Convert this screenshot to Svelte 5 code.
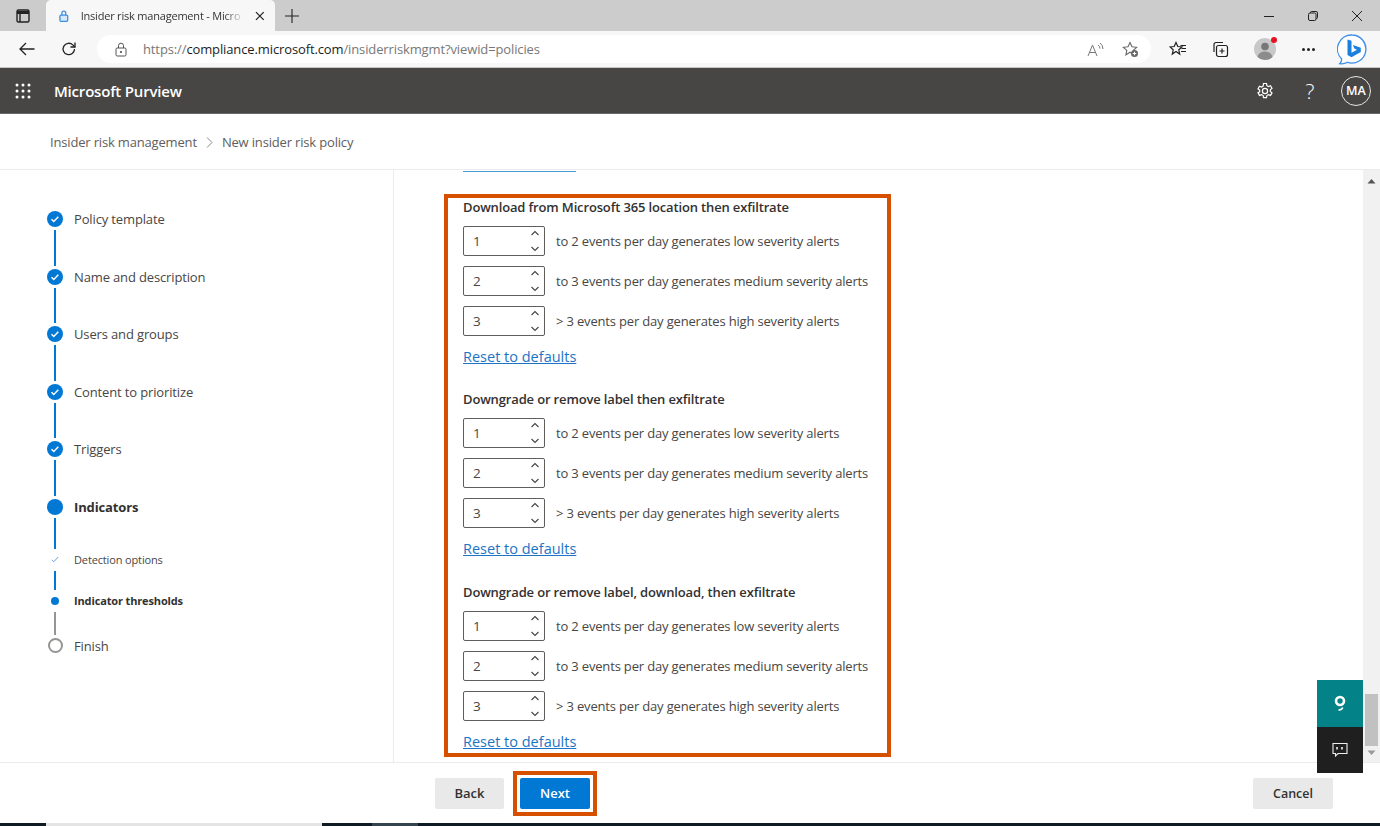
<script lang="ts">
    const steps = [
        { label: "Policy template", kind: "done" },
        { label: "Name and description", kind: "done" },
        { label: "Users and groups", kind: "done" },
        { label: "Content to prioritize", kind: "done" },
        { label: "Triggers", kind: "done" },
        { label: "Indicators", kind: "current" },
        { label: "Detection options", kind: "subdone" },
        { label: "Indicator thresholds", kind: "subcurrent" },
        { label: "Finish", kind: "todo" },
    ];

    const sections = [
        "Download from Microsoft 365 location then exfiltrate",
        "Downgrade or remove label then exfiltrate",
        "Downgrade or remove label, download, then exfiltrate",
    ];

    const rows = [
        { value: 1, text: "to 2 events per day generates low severity alerts" },
        { value: 2, text: "to 3 events per day generates medium severity alerts" },
        { value: 3, text: "> 3 events per day generates high severity alerts" },
    ];
</script>

<div class="page">
    <div class="tabbar">
        <svg class="tabs-icon" width="16" height="16" viewBox="0 0 16 16" fill="none" stroke="#222" stroke-width="1.4">
            <rect x="2" y="2" width="12" height="12" rx="1.5" />
            <path d="M2 4.5h12" stroke-width="3" />
            <path d="M5 5v9" />
        </svg>
        <div class="tab">
            <svg width="12" height="14" viewBox="0 0 12 14" fill="none" stroke="#3b8fe0" stroke-width="1.3">
                <rect x="2" y="6" width="8" height="6.5" rx="1" fill="#d6e8fa" />
                <path d="M4 6V4a2 2 0 0 1 4 0v2" />
            </svg>
            <span class="tab-title">Insider risk management - Micro</span>
            <svg width="10" height="10" viewBox="0 0 10 10" stroke="#222" stroke-width="1.3"><path d="M1 1l8 8M9 1l-8 8" /></svg>
        </div>
        <svg class="plus" width="14" height="14" viewBox="0 0 14 14" stroke="#222" stroke-width="1.1"><path d="M7 0v14M0 7h14" /></svg>
        <div class="window-btns">
            <svg width="12" height="12" viewBox="0 0 12 12" stroke="#222" stroke-width="1"><path d="M1 6.5h10" /></svg>
            <svg width="12" height="12" viewBox="0 0 12 12" fill="none" stroke="#222" stroke-width="1"><rect x="1.5" y="3" width="7.5" height="7.5" rx="1.5" /><path d="M3.5 3V2.5a1 1 0 0 1 1-1h4.5a1.5 1.5 0 0 1 1.5 1.5v4.5a1 1 0 0 1-1 1H9" /></svg>
            <svg width="12" height="12" viewBox="0 0 12 12" stroke="#222" stroke-width="1"><path d="M1 1l10 10M11 1l-10 10" /></svg>
        </div>
    </div>

    <div class="toolbar">
        <svg class="back" width="16" height="14" viewBox="0 0 16 14" fill="none" stroke="#222" stroke-width="1.3"><path d="M15.500 7H1M7 1L1 7l6 6" /></svg>
        <svg class="reload" width="16" height="16" viewBox="0 0 16 16" fill="none" stroke="#222" stroke-width="1.3"><path d="M13.500 8a5.700 5.700 0 1 1-1.700-4.100L14 6" /><path d="M14 1.500V6H9.500" /></svg>
        <div class="address">
            <svg width="12" height="15" viewBox="0 0 12 15" fill="none" stroke="#555" stroke-width="1"><rect x="1" y="6" width="10" height="8" rx="1.2" /><path d="M3.500 6V3.700a2.500 2.500 0 0 1 5 0V6" /><circle cx="6" cy="10" r=".7" fill="#555" /></svg>
            <span class="url"><span class="dim">https://</span>compliance.microsoft.com<span class="dim">/insiderriskmgmt?viewid=policies</span></span>
            <svg class="read" width="17" height="15" viewBox="0 0 17 15" fill="none" stroke="#777" stroke-width="1"><path d="M1 14L5.500 3 10 14M2.600 10.500h5.800" /><path d="M11 3q2 1 2 3.500M13 1q3 2 3 6" /></svg>
            <svg class="fav-add" width="17" height="17" viewBox="0 0 17 17" fill="none" stroke="#666" stroke-width="1.1"><path d="M8 1.500l2 4.300 4.600.5-3.400 3.100.9 4.500L8 11.200l-4.100 2.700.9-4.500L1.400 6.300 6 5.800z" /><circle cx="12.500" cy="12.500" r="3.500" fill="#666" stroke="none" /><path d="M12.500 10.700v3.600M10.700 12.500h3.600" stroke="#fff" /></svg>
        </div>
        <div class="tools">
            <svg width="18" height="16" viewBox="0 0 18 16" fill="none" stroke="#222" stroke-width="1.2"><path d="M7 1.500l1.800 4 4.200.4-3.200 2.900.9 4.300L7 10.500l-3.700 2.600.9-4.300L1 5.900l4.200-.4z" /><path d="M11.500 4.500H17M12.500 7.500H17M12 10.500h5" /></svg>
            <svg width="17" height="17" viewBox="0 0 17 17" fill="none" stroke="#222" stroke-width="1.2"><rect x="4.500" y="4.500" width="11" height="11" rx="2" /><path d="M10 7.500v5M7.500 10h5" /><path d="M2 11V3.500A2 2 0 0 1 4 1.500h7" /></svg>
            <div class="avatar">
                <svg width="22" height="22" viewBox="0 0 22 22"><circle cx="11" cy="11" r="11" fill="#c8c8c8" /><circle cx="11" cy="8.500" r="3.800" fill="#777" /><path d="M3.500 19c1-4 4-5.500 7.500-5.500s6.500 1.500 7.500 5.500A11 11 0 0 1 3.500 19z" fill="#8c8c8c" /></svg>
                <span class="red-dot"></span>
            </div>
            <span class="dots"><i></i><i></i><i></i></span>
            <svg class="bing" width="30" height="31" viewBox="0 0 30 31">
                <path d="M15 1a14 14 0 1 1-4.500 27.300c-2 1.200-5 1.700-7.800 1.400 1.300-1 2-2.700 2-4.700A14 14 0 0 1 15 1z" fill="#fff" stroke="#3f8fe8" stroke-width="1.300" />
                <path d="M10.500 5.500l4 1.300v12l5.500-3-2.700-1.200-1.400-3.600 7.900 2.800v4.100l-9.300 5.400-4-2.400z" fill="#1b7fe0" />
            </svg>
        </div>
    </div>

    <header class="suite">
        <svg class="waffle" width="16" height="16" viewBox="0 0 16 16" fill="#fff">
            {#each [2, 8, 14] as y}
                {#each [2, 8, 14] as x}
                    <circle cx={x} cy={y} r="1.500" />
                {/each}
            {/each}
        </svg>
        <span class="brand">Microsoft Purview</span>
        <div class="suite-actions">
            <svg width="18" height="18" viewBox="0 0 18 18" fill="none" stroke="#fff" stroke-width="1.200">
                <path d="M7.500 1.500h3l.4 2.200 1.500.9 2.100-.8 1.500 2.600-1.700 1.400v1.600l1.700 1.400-1.500 2.600-2.100-.8-1.500.9-.4 2.200h-3l-.4-2.200-1.500-.9-2.100.8-1.500-2.600L3.700 9.800V8.200L2 6.800l1.500-2.600 2.100.8 1.500-.9z" />
                <circle cx="9" cy="9" r="2.600" />
            </svg>
            <span class="help">?</span>
            <span class="me">MA</span>
        </div>
    </header>

    <nav class="crumbs">
        <span>Insider risk management</span>
        <svg width="7" height="11" viewBox="0 0 7 11" fill="none" stroke="#8a8886" stroke-width="1"><path d="M1 .5l5 5-5 5" /></svg>
        <span>New insider risk policy</span>
    </nav>

    <main class="main">
        <aside class="wizard">
            {#each steps as step, i}
                <div class="step {step.kind}">
                    <span class="rail">
                        {#if step.kind === "done"}
                            <svg width="16" height="16" viewBox="0 0 16 16"><circle cx="8" cy="8" r="8" fill="#0078d4" /><path d="M4.500 8.300l2.300 2.200 4.500-4.700" fill="none" stroke="#fff" stroke-width="1.500" /></svg>
                        {:else if step.kind === "current"}
                            <span class="dot big"></span>
                        {:else if step.kind === "subdone"}
                            <svg width="8" height="7" viewBox="0 0 8 7"><path d="M.8 3.800l2 2L7.200 1" fill="none" stroke="#6d9fd8" stroke-width="1" /></svg>
                        {:else if step.kind === "subcurrent"}
                            <span class="dot small"></span>
                        {:else}
                            <span class="dot hollow"></span>
                        {/if}
                    </span>
                    <span class="step-label">{step.label}</span>
                </div>
                {#if i < steps.length - 1}
                    <span class="link-line" class:grey={step.kind === "subcurrent"} class:short={i >= 6} class:mid={i === 5}></span>
                {/if}
            {/each}
        </aside>

        <section class="pane">
            <div class="cut-link"></div>
            <div class="callout">
                {#each sections as title}
                    <div class="group">
                        <h3>{title}</h3>
                        {#each rows as row}
                            <div class="row">
                                <div class="spin">
                                    <span>{row.value}</span>
                                    <svg width="10" height="24" viewBox="0 0 10 24" fill="none" stroke="#444" stroke-width="1.100"><path d="M1.500 6L5 2.500 8.500 6M1.500 18L5 21.500 8.500 18" /></svg>
                                </div>
                                <span class="row-text">{row.text}</span>
                            </div>
                        {/each}
                        <a href="#top" class="reset">Reset to defaults</a>
                    </div>
                {/each}
            </div>
        </section>

        <div class="scrollbar">
            <svg width="9" height="6" viewBox="0 0 9 6" fill="#555"><path d="M4.500 1L8.500 5.500H.5z" /></svg>
            <span class="thumb"></span>
            <svg width="9" height="6" viewBox="0 0 9 6" fill="#999"><path d="M4.500 5L8.500.5H.5z" /></svg>
        </div>

        <div class="float-btns">
            <div class="fb teal">
                <svg width="12" height="16" viewBox="0 0 12 16" fill="none" stroke="#fff"><circle cx="6" cy="6" r="4" stroke-width="2.600" /><path d="M4.500 14.700c2 .5 3.500-.2 4.300-2.200" stroke-width="1.700" /></svg>
            </div>
            <div class="fb dark">
                <svg width="16" height="16" viewBox="0 0 16 16" fill="none" stroke="#eee" stroke-width="1.100"><path d="M1 1.500h14v10H6l-2.500 2.500v-2.500H1z" /><path d="M5 5v2.500M10 5v2.500" stroke-width="1.600" /></svg>
            </div>
        </div>
    </main>

    <footer class="footer">
        <button class="btn back-btn">Back</button>
        <span class="next-mark"><button class="btn primary">Next</button></span>
        <button class="btn cancel">Cancel</button>
    </footer>

    <div class="taskbar"><i class="white"></i><i class="lit"></i></div>
</div>

<style>
    :global(body) {
        margin: 0;
        background: #fff;
    }

    .page {
        width: 1380px;
        height: 826px;
        display: flex;
        flex-direction: column;
        overflow: hidden;
        font-family: "Open Sans", "Noto Sans", sans-serif;
        color: #323130;
    }

    .tabbar {
        height: 31px;
        background: #cccccc;
        display: flex;
        align-items: center;
        flex: none;
    }

    .tabs-icon {
        margin-left: 15px;
    }

    .tab {
        width: 229px;
        height: 31px;
        margin-left: 15px;
        box-sizing: border-box;
        padding: 0 10px 0 12px;
        background: #f7f7f7;
        border-radius: 5px 5px 0 0;
        display: flex;
        align-items: center;
        gap: 11px;
    }

    .tab-title {
        width: 169px;
        font-size: 11px;
        white-space: nowrap;
        color: #333;
        letter-spacing: -0.2px;
        -webkit-mask-image: linear-gradient(to right, #000 88%, transparent 100%);
        mask-image: linear-gradient(to right, #000 88%, transparent 100%);
    }

    .plus {
        margin-left: 10px;
    }

    .window-btns {
        margin-left: auto;
        margin-right: 17px;
        display: flex;
        gap: 32px;
    }

    .toolbar {
        height: 37px;
        background: #f7f7f7;
        border-bottom: 1px solid #c6c6c6;
        box-sizing: border-box;
        display: flex;
        align-items: center;
        flex: none;
    }

    .back {
        margin-left: 19px;
    }

    .reload {
        margin-left: 26px;
    }

    .address {
        width: 1054px;
        height: 28px;
        margin-left: 20px;
        border-radius: 14px;
        background: #fff;
        display: flex;
        align-items: center;
        box-sizing: border-box;
        padding-left: 18px;
    }

    .url {
        margin-left: 16px;
        font-size: 13px;
        color: #1d1d1d;
        letter-spacing: -0.12px;
        white-space: nowrap;
    }

    .dim {
        color: #777;
    }

    .read {
        margin-left: auto;
    }

    .fav-add {
        margin: 0 12px 0 18px;
    }

    .tools {
        display: flex;
        align-items: center;
        margin-left: 18px;
    }

    .tools > svg:nth-child(2) {
        margin-left: 25px;
    }

    .avatar {
        position: relative;
        width: 22px;
        height: 22px;
        margin-left: 25px;
    }

    .avatar svg {
        display: block;
    }

    .red-dot {
        position: absolute;
        top: -1px;
        right: -1px;
        width: 6px;
        height: 6px;
        border-radius: 50%;
        background: #e81123;
    }

    .dots {
        display: flex;
        gap: 2px;
        margin-left: 26px;
    }

    .dots i {
        width: 3px;
        height: 3px;
        border-radius: 50%;
        background: #222;
    }

    .bing {
        margin-left: 22px;
    }

    .suite {
        height: 46px;
        background: #484644;
        border-bottom: 1px solid #6a6866;
        box-sizing: border-box;
        display: flex;
        align-items: center;
        color: #fff;
        flex: none;
    }

    .waffle {
        margin-left: 15px;
    }

    .brand {
        margin-left: 23px;
        font-size: 15px;
        font-weight: 600;
        letter-spacing: -0.2px;
    }

    .suite-actions {
        margin-left: auto;
        margin-right: 9px;
        display: flex;
        align-items: center;
    }

    .help {
        margin-left: 21px;
        width: 30px;
        font-size: 21px;
        font-weight: 300;
        text-align: center;
    }

    .me {
        margin-left: 16px;
        width: 28px;
        height: 28px;
        border: 1px solid #e6e6e6;
        border-radius: 50%;
        display: flex;
        align-items: center;
        justify-content: center;
        font-size: 12.500px;
        font-weight: 600;
    }

    .crumbs {
        height: 56px;
        flex: none;
        box-sizing: border-box;
        border-bottom: 1px solid #edebe9;
        padding: 1px 0 0 50px;
        display: flex;
        align-items: center;
        gap: 9px;
        font-size: 13px;
        color: #605e5c;
        letter-spacing: -0.17px;
    }

    .main {
        position: relative;
        flex: 1;
        display: flex;
        min-height: 0;
    }

    .wizard {
        width: 394px;
        flex: none;
        box-sizing: border-box;
        border-right: 1px solid #edebe9;
        padding: 38px 0 0 45px;
        display: flex;
        flex-direction: column;
    }

    .step {
        display: flex;
        align-items: center;
        height: 22px;
        flex: none;
    }

    .rail {
        width: 20px;
        display: flex;
        justify-content: center;
        align-items: center;
    }

    .step-label {
        margin-left: 9px;
        font-size: 13px;
        letter-spacing: -0.14px;
        color: #484644;
    }

    .current .step-label,
    .subcurrent .step-label {
        font-weight: 700;
        color: #323130;
    }

    .subdone .step-label,
    .subcurrent .step-label {
        font-size: 11px;
    }

    .dot {
        display: block;
        border-radius: 50%;
        box-sizing: border-box;
    }

    .big {
        width: 16px;
        height: 16px;
        background: #0078d4;
    }

    .small {
        width: 8px;
        height: 8px;
        background: #0078d4;
    }

    .hollow {
        width: 15px;
        height: 15px;
        border: 2px solid #979593;
    }

    .link-line {
        width: 2px;
        height: 35.500px;
        margin-left: 9px;
        background: #0078d4;
        flex: none;
    }

    .link-line.mid {
        height: 31px;
    }

    .link-line.short {
        height: 19px;
    }

    .link-line.grey {
        height: 23px;
        background: #979593;
    }

    .pane {
        flex: 1;
        min-width: 0;
        overflow: hidden;
        padding-left: 50px;
    }

    .cut-link {
        width: 113px;
        height: 1px;
        margin-left: 19px;
        margin-top: 1px;
        background: #4a9ad8;
    }

    .callout {
        width: 447px;
        height: 563px;
        margin-top: 22px;
        box-sizing: border-box;
        border: 4px solid #d75000;
        padding-left: 15px;
    }

    .group {
        height: 192.400px;
    }

    h3 {
        margin: 0;
        height: 28px;
        font-size: 13px;
        line-height: 18px;
        font-weight: 600;
        letter-spacing: -0.15px;
        color: #323130;
        white-space: nowrap;
    }

    .row {
        display: flex;
        align-items: center;
        height: 30px;
        margin-bottom: 10px;
    }

    .spin {
        width: 82px;
        height: 30px;
        box-sizing: border-box;
        border: 1px solid #605e5c;
        border-radius: 2px;
        display: flex;
        align-items: center;
        justify-content: space-between;
        padding: 0 4px 0 9px;
        font-size: 13.500px;
        color: #484644;
    }

    .row-text {
        margin-left: 11px;
        font-size: 13px;
        letter-spacing: -0.17px;
        color: #484644;
        white-space: nowrap;
    }

    .reset {
        display: block;
        width: fit-content;
        margin-top: 11px;
        font-size: 14.500px;
        color: #1b74c4;
        text-decoration: underline;
    }

    .scrollbar {
        width: 17px;
        flex: none;
        background: #f1f1f1;
        display: flex;
        flex-direction: column;
        align-items: center;
        padding: 8px 0 6px;
        box-sizing: border-box;
    }

    .thumb {
        width: 13px;
        height: 52px;
        margin-top: auto;
        margin-bottom: 4px;
        background: #c1c1c1;
    }

    .float-btns {
        position: absolute;
        right: 17px;
        top: 510px;
        width: 46px;
    }

    .fb {
        height: 46.500px;
        display: flex;
        align-items: center;
        justify-content: center;
    }

    .teal {
        background: #038387;
    }

    .dark {
        background: #1f1f1f;
    }

    .footer {
        height: 61px;
        flex: none;
        box-sizing: border-box;
        border-top: 1px solid #edebe9;
        display: flex;
        align-items: center;
        padding: 0 47px 0 435px;
    }

    .btn {
        width: 69px;
        height: 31px;
        border: 0;
        border-radius: 2px;
        background: #e9e9e9;
        font-family: inherit;
        font-size: 13px;
        font-weight: 600;
        color: #323130;
        padding: 0;
    }

    .next-mark {
        margin-left: 9px;
        padding: 3px;
        border: 4px solid #d75000;
        display: flex;
        background: #fff;
    }

    .primary {
        width: 70px;
        background: #0078d4;
        color: #fff;
    }

    .cancel {
        width: 80px;
        margin-left: auto;
        font-size: 12.500px;
    }

    .taskbar {
        height: 3px;
        flex: none;
        background: #0e1a24;
        display: flex;
    }

    .white {
        width: 276px;
        margin-left: 46px;
        background: #e4e4e4;
    }

    .lit {
        width: 46px;
        margin-left: 50px;
        background: #34444f;
    }
</style>
